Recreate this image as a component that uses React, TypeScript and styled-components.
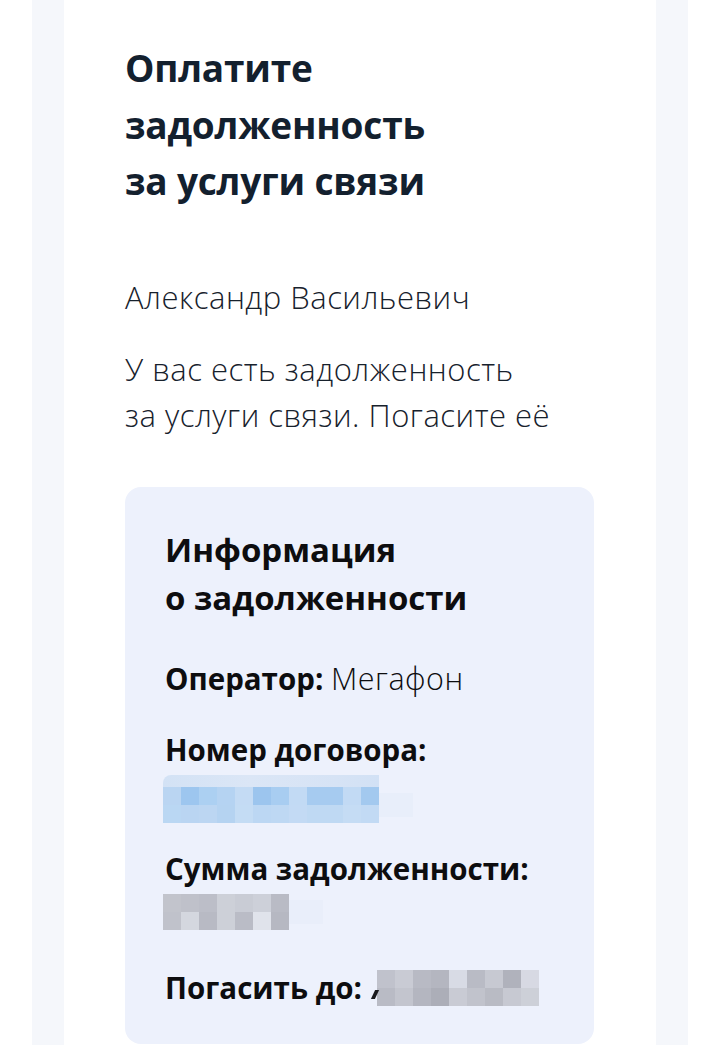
import styled, { createGlobalStyle } from "styled-components";

const GlobalStyle = createGlobalStyle`
  html, body {
    margin: 0;
    padding: 0;
    background: #ffffff;
  }
  body {
    font-family: "Open Sans", "Liberation Sans", sans-serif;
  }
`;

const Page = styled.div`
  height: 1045px;
  overflow: hidden;
  padding: 0 31px 0 32px;
  background: #ffffff;
`;

const Frame = styled.div`
  height: 100%;
  padding: 0 32px;
  background: #f5f7fb;
`;

const Sheet = styled.div`
  height: 100%;
  padding: 40px 62px 0 61px;
  background: #ffffff;
`;

const Heading = styled.h1`
  margin: 0;
  font-family: "Open Sans", sans-serif;
  font-size: 37px;
  font-weight: 700;
  line-height: 56.5px;
  letter-spacing: -0.2px;
  color: #13202e;
`;

const BodyText = styled.p<{ $gap: number; $lh: number }>`
  margin: ${(p) => p.$gap}px 0 0;
  font-family: "Open Sans", sans-serif;
  font-size: 31px;
  font-weight: 300;
  line-height: ${(p) => p.$lh}px;
  letter-spacing: 0.5px;
  color: #17212c;
`;

const InfoBox = styled.section`
  margin-top: 49px;
  padding: 39px 40px 40px;
  height: 557px;
  box-sizing: border-box;
  border-radius: 16px;
  background: #edf1fc;
`;

const InfoTitle = styled.h2`
  margin: 0;
  font-family: "Open Sans", sans-serif;
  font-size: 33px;
  font-weight: 700;
  line-height: 48px;
  color: #0d0d0f;
`;

const Field = styled.div<{ $gap: number }>`
  margin-top: ${(p) => p.$gap}px;
  font-family: "Open Sans", sans-serif;
  font-size: 29.5px;
  line-height: 38px;
  color: #0d0d0f;
`;

const Label = styled.span`
  font-weight: 700;
`;

const Value = styled.span`
  font-weight: 300;
  font-size: 30.5px;
  letter-spacing: 0.5px;
`;

const InlineRow = styled.div`
  display: flex;
  align-items: center;
`;

const Peek = styled.span`
  width: 4px;
  height: 9px;
  margin: 14px 0 0 11px;
  background: #1a1a1e;
  transform: skewX(-25deg);
`;

const Mosaic = styled.div<{ $cols: number; $trail: string }>`
  display: inline-grid;
  grid-template-columns: repeat(${(p) => p.$cols}, 18px);
  grid-auto-rows: 18px;
  box-shadow: 40px 0 0 -6px ${(p) => p.$trail};
`;

const Cell = styled.div<{ $c: string }>`
  background: ${(p) => p.$c};
`;

const MosaicWrap = styled.div<{ $mt: number }>`
  margin-top: ${(p) => p.$mt}px;
  display: flex;
  margin-left: -2px;
`;

const Stack = styled.div`
  display: flex;
  flex-direction: column;
`;

const NumberTop = styled.div`
  height: 12px;
  width: 216px;
  background: linear-gradient(90deg, #d3e2f5, #dbe6f6 40%, #d6e3f5 80%, #d2e1f5);
  border-radius: 8px 0 0 0;
`;

const numberCells = [
  "#bad5f2", "#9dc6ef", "#acd0f2", "#b5d3f2", "#c4dbf4", "#9cc5ee",
  "#a8cdf1", "#c2daf4", "#a6cbf0", "#a6cbf0", "#c2daf4", "#a3c9ef",
  "#bad7f3", "#bad5f2", "#bcd6f2", "#b5d3f1", "#c4dcf4", "#bcd7f3",
  "#bed8f3", "#c3daf4", "#bfd9f3", "#bfd9f3", "#c5dcf4", "#c2daf4",
];

const sumCells = [
  "#c2c4cc", "#bfc1ca", "#bcbec8", "#cdd0d8", "#c9ccd5", "#cdd0d9", "#b9bbc5",
  "#c0c2cb", "#d4d7df", "#b8bac4", "#cdd0d8", "#babcc6", "#e0e3eb", "#b6b8c2",
];

const dateCells = [
  "#c0c2cc", "#c9cbd4", "#b8bac4", "#b4b6c0", "#d8dbe5", "#b9bbc5", "#c7c9d2", "#b0b2bc", "#d7d9e3",
  "#b9bbc5", "#c3c5ce", "#b4b6c0", "#acaeb8", "#c9cbd4", "#c1c3cc", "#b9bbc4", "#c7c9d2", "#cdd0d8",
];

const Pixelated = ({ cells, cols, trail }: { cells: string[]; cols: number; trail: string }) => (
  <Mosaic $cols={cols} $trail={trail}>
    {cells.map((c, i) => (
      <Cell key={i} $c={c} />
    ))}
  </Mosaic>
);

export default function App() {
  return (
    <>
      <GlobalStyle />
      <Page>
        <Frame>
          <Sheet>
            <Heading>
              Оплатите
              <br />
              задолженность
              <br />
              за услуги связи
            </Heading>
            <BodyText $gap={67} $lh={40}>
              Александр Васильевич
            </BodyText>
            <BodyText $gap={29} $lh={46}>
              У вас есть задолженность
              <br />
              за услуги связи. Погасите её
            </BodyText>
            <InfoBox>
              <InfoTitle>
                Информация
                <br />о задолженности
              </InfoTitle>
              <Field $gap={37}>
                <Label>Оператор:</Label> <Value>Мегафон</Value>
              </Field>
              <Field $gap={33}>
                <Label>Номер договора:</Label>
              </Field>
              <MosaicWrap $mt={6}>
                <Stack>
                  <NumberTop />
                  <Pixelated cells={numberCells} cols={12} trail="#e8eefa" />
                </Stack>
              </MosaicWrap>
              <Field $gap={27}>
                <Label>Сумма задолженности:</Label>
              </Field>
              <MosaicWrap $mt={6}>
                <Pixelated cells={sumCells} cols={7} trail="#e9eefa" />
              </MosaicWrap>
              <Field $gap={39}>
                <InlineRow>
                  <Label>Погасить до:</Label>
                  <Peek />
                  <Pixelated cells={dateCells} cols={9} trail="#edf1fc" />
                </InlineRow>
              </Field>
            </InfoBox>
          </Sheet>
        </Frame>
      </Page>
    </>
  );
}
